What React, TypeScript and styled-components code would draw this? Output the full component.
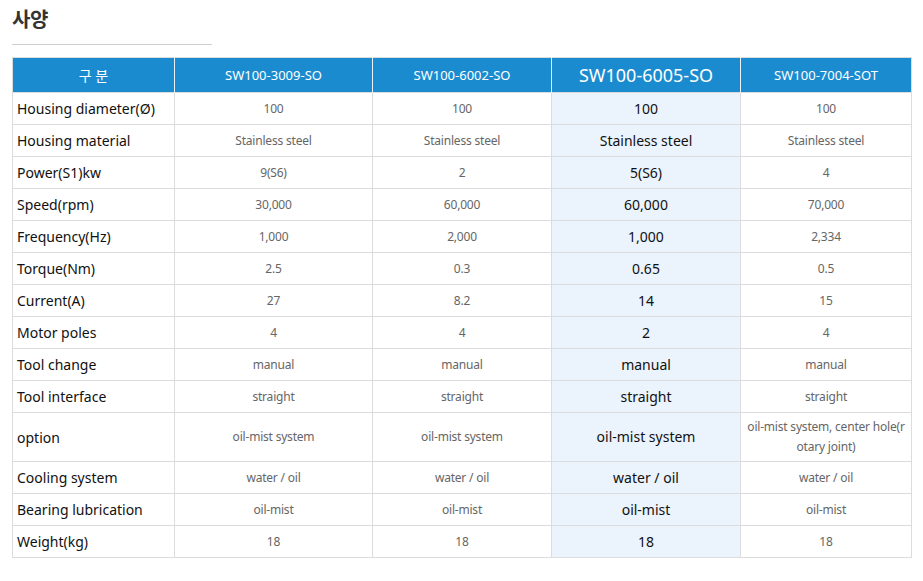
import styled, { createGlobalStyle } from "styled-components";

const GlobalStyle = createGlobalStyle`
    body {
        margin: 0;
        background: #fff;
        font-family: "Noto Sans", "Noto Sans CJK KR", sans-serif;
    }
`;

const models = ["SW100-3009-SO", "SW100-6002-SO", "SW100-6005-SO", "SW100-7004-SOT"];
const colWidths = [162, 198, 179, 189, 171];
const highlight = 2;

const rows: { label: string; values: string[]; tall?: boolean }[] = [
    { label: "Housing diameter(Ø)", values: ["100", "100", "100", "100"] },
    { label: "Housing material", values: ["Stainless steel", "Stainless steel", "Stainless steel", "Stainless steel"] },
    { label: "Power(S1)kw", values: ["9(S6)", "2", "5(S6)", "4"] },
    { label: "Speed(rpm)", values: ["30,000", "60,000", "60,000", "70,000"] },
    { label: "Frequency(Hz)", values: ["1,000", "2,000", "1,000", "2,334"] },
    { label: "Torque(Nm)", values: ["2.5", "0.3", "0.65", "0.5"] },
    { label: "Current(A)", values: ["27", "8.2", "14", "15"] },
    { label: "Motor poles", values: ["4", "4", "2", "4"] },
    { label: "Tool change", values: ["manual", "manual", "manual", "manual"] },
    { label: "Tool interface", values: ["straight", "straight", "straight", "straight"] },
    {
        label: "option",
        values: ["oil-mist system", "oil-mist system", "oil-mist system", "oil-mist system, center hole(rotary joint)"],
        tall: true,
    },
    { label: "Cooling system", values: ["water / oil", "water / oil", "water / oil", "water / oil"] },
    { label: "Bearing lubrication", values: ["oil-mist", "oil-mist", "oil-mist", "oil-mist"] },
    { label: "Weight(kg)", values: ["18", "18", "18", "18"] },
];

const App: React.FC = () => {
    return (
        <Page>
            <GlobalStyle />
            <Title>사양</Title>
            <Rule />
            <SpecTable>
                <colgroup>
                    {colWidths.map((w, i) => (
                        <Col key={i} $w={w} />
                    ))}
                </colgroup>
                <thead>
                    <tr>
                        <HeadCell>구 분</HeadCell>
                        {models.map((m, i) => (
                            <HeadCell key={m} $active={i === highlight}>{m}</HeadCell>
                        ))}
                    </tr>
                </thead>
                <tbody>
                    {rows.map((row) => (
                        <BodyRow key={row.label} $tall={row.tall}>
                            <LabelCell>{row.label}</LabelCell>
                            {row.values.map((v, i) => (
                                <ValueCell key={i} $active={i === highlight}>{v}</ValueCell>
                            ))}
                        </BodyRow>
                    ))}
                </tbody>
            </SpecTable>
        </Page>
    );
};

export default App;

// Styled-components
const Page = styled.div`
    width: 923px;
    padding: 6px 12px 20px 12px;
    box-sizing: border-box;
`;

const Title = styled.h2`
    margin: 0;
    font-size: 20px;
    font-weight: 700;
    color: #333;
    line-height: 28px;
    letter-spacing: -0.5px;
`;

const Rule = styled.div`
    width: 200px;
    height: 1px;
    background: #cfcfcf;
    margin: 10px 0 12px 0;
`;

const SpecTable = styled.table`
    width: 900px;
    border-collapse: collapse;
    table-layout: fixed;
    border: 1px solid #dcdcdc;
`;

const Col = styled.col<{ $w: number }>`
    width: ${(p) => p.$w}px;
`;

const HeadCell = styled.th<{ $active?: boolean }>`
    height: 34px;
    padding: 0;
    background: #1b8bd0;
    color: #fff;
    font-weight: 400;
    font-size: ${(p) => (p.$active ? "18px" : "13px")};
    text-align: center;
    border-right: 1px solid #e8f1f8;
    &:first-child {
        font-size: 14px;
    }
    &:last-child {
        border-right: none;
    }
`;

const BodyRow = styled.tr<{ $tall?: boolean }>`
    height: ${(p) => (p.$tall ? "49px" : "32px")};
`;

const LabelCell = styled.td`
    padding: 0 4px;
    border: 1px solid #dcdcdc;
    color: #111;
    font-size: 14px;
    text-align: left;
`;

const ValueCell = styled.td<{ $active?: boolean }>`
    padding: 0 4px;
    border: 1px solid #dcdcdc;
    text-align: center;
    line-height: 20px;
    word-break: break-all;
    background: ${(p) => (p.$active ? "#ebf3fc" : "#fff")};
    color: ${(p) => (p.$active ? "#111" : "#666")};
    font-size: ${(p) => (p.$active ? "14px" : "12px")};
    letter-spacing: ${(p) => (p.$active ? "0" : "-0.2px")};
`;
